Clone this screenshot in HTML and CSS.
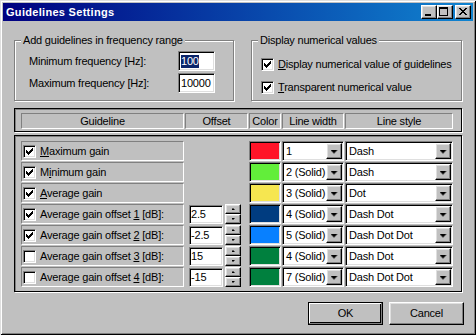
FILE: index.html
```html
<!DOCTYPE html>
<html>

<head>
    <meta charset="utf-8" />
    <title>Guidelines Settings</title>
    <meta name="viewport" content="width=device-width, initial-scale=1">
    <link rel="stylesheet" href="styles.css">
</head>

<body>
    <div class="window">
        <div class="titlebar">
            <span class="title">Guidelines Settings</span>
            <div class="caption-buttons">
                <span class="cap-btn">
                    <svg width="14" height="12" viewBox="0 0 14 12" shape-rendering="crispEdges"><path d="M3 8h6v2H3z" /></svg>
                </span>
                <span class="cap-btn">
                    <svg width="14" height="12" viewBox="0 0 14 12" shape-rendering="crispEdges"><path fill-rule="evenodd" d="M1 1h9v9H1z M2 3v6h7V3z" /></svg>
                </span>
                <span class="cap-btn close">
                    <svg width="14" height="12" viewBox="0 0 14 12" shape-rendering="crispEdges"><path d="M3 2h2v1H3z M9 2h2v1H9z M4 3h2v1H4z M8 3h2v1H8z M5 4h4v1H5z M6 5h2v1H6z M5 6h4v1H5z M4 7h2v1H4z M8 7h2v1H8z M3 8h2v1H3z M9 8h2v1H9z" /></svg>
                </span>
            </div>
        </div>

        <div class="client">
            <div class="groups">
                <div class="group freq">
                    <div class="group-title">Add guidelines in frequency range</div>
                    <div class="field">
                        <span>Minimum frequency [Hz]:</span>
                        <span class="edit"><span class="selected">100</span></span>
                    </div>
                    <div class="field">
                        <span>Maximum frequency [Hz]:</span>
                        <span class="edit">10000</span>
                    </div>
                </div>
                <div class="group display">
                    <div class="group-title">Display numerical values</div>
                    <div class="option">
                        <span class="check on"></span>
                        <span><u>D</u>isplay numerical value of guidelines</span>
                    </div>
                    <div class="option">
                        <span class="check on"></span>
                        <span><u>T</u>ransparent numerical value</span>
                    </div>
                </div>
            </div>

            <div class="frame header-frame">
                <div class="cols">
                    <div class="head-cell">Guideline</div>
                    <div class="head-cell">Offset</div>
                    <div class="head-cell">Color</div>
                    <div class="head-cell">Line width</div>
                    <div class="head-cell">Line style</div>
                </div>
            </div>

            <div class="frame list-frame">
                <div class="cols">
                    <div class="guide"><span class="check on"></span><span><u>M</u>aximum gain</span></div>
                    <div class="offset"></div>
                    <div class="swatch" style="background: #ff1428;"></div>
                    <div class="combo"><span class="combo-text">1</span><span class="drop"></span></div>
                    <div class="combo"><span class="combo-text">Dash</span><span class="drop"></span></div>
                </div>
                <div class="cols">
                    <div class="guide"><span class="check on"></span><span>M<u>i</u>nimum gain</span></div>
                    <div class="offset"></div>
                    <div class="swatch" style="background: #62ee3a;"></div>
                    <div class="combo"><span class="combo-text">2 (Solid)</span><span class="drop"></span></div>
                    <div class="combo"><span class="combo-text">Dash</span><span class="drop"></span></div>
                </div>
                <div class="cols">
                    <div class="guide"><span class="check on"></span><span><u>A</u>verage gain</span></div>
                    <div class="offset"></div>
                    <div class="swatch" style="background: #f6e650;"></div>
                    <div class="combo"><span class="combo-text">3 (Solid)</span><span class="drop"></span></div>
                    <div class="combo"><span class="combo-text">Dot</span><span class="drop"></span></div>
                </div>
                <div class="cols">
                    <div class="guide"><span class="check on"></span><span>Average gain offset <u>1</u> [dB]:</span></div>
                    <div class="offset"><span class="edit small">2.5</span><span class="spin"><span class="spin-btn up"></span><span class="spin-btn down"></span></span></div>
                    <div class="swatch" style="background: #003c80;"></div>
                    <div class="combo"><span class="combo-text">4 (Solid)</span><span class="drop"></span></div>
                    <div class="combo"><span class="combo-text">Dash Dot</span><span class="drop"></span></div>
                </div>
                <div class="cols">
                    <div class="guide"><span class="check on"></span><span>Average gain offset <u>2</u> [dB]:</span></div>
                    <div class="offset"><span class="edit small">-2.5</span><span class="spin"><span class="spin-btn up"></span><span class="spin-btn down"></span></span></div>
                    <div class="swatch" style="background: #0880ff;"></div>
                    <div class="combo"><span class="combo-text">5 (Solid)</span><span class="drop"></span></div>
                    <div class="combo"><span class="combo-text">Dash Dot Dot</span><span class="drop"></span></div>
                </div>
                <div class="cols">
                    <div class="guide"><span class="check"></span><span>Average gain offset <u>3</u> [dB]:</span></div>
                    <div class="offset"><span class="edit small">15</span><span class="spin"><span class="spin-btn up"></span><span class="spin-btn down"></span></span></div>
                    <div class="swatch" style="background: #00803e;"></div>
                    <div class="combo"><span class="combo-text">4 (Solid)</span><span class="drop"></span></div>
                    <div class="combo"><span class="combo-text">Dash Dot</span><span class="drop"></span></div>
                </div>
                <div class="cols">
                    <div class="guide"><span class="check"></span><span>Average gain offset <u>4</u> [dB]:</span></div>
                    <div class="offset"><span class="edit small">-15</span><span class="spin"><span class="spin-btn up"></span><span class="spin-btn down"></span></span></div>
                    <div class="swatch" style="background: #00803e;"></div>
                    <div class="combo"><span class="combo-text">7 (Solid)</span><span class="drop"></span></div>
                    <div class="combo"><span class="combo-text">Dash Dot Dot</span><span class="drop"></span></div>
                </div>
            </div>

            <div class="buttons">
                <span class="btn default">OK</span>
                <span class="btn">Cancel</span>
            </div>
        </div>
    </div>
</body>

</html>
```

FILE: styles.css
```css
/* base */

* {
    box-sizing: border-box;
}

body {
    margin: 0;
    background: #c0c0c0;
    color: #000;
    font: 11px/13px "Liberation Sans", Arial, sans-serif;
    letter-spacing: -0.2px;
}

/* window frame */

.window {
    width: 476px;
    height: 335px;
    padding: 3px;
    background: #c0c0c0;
    box-shadow: inset 1px 1px #dfdfdf, inset -1px -1px #000, inset 2px 2px #fff, inset -2px -2px #808080;
}

.titlebar {
    display: flex;
    align-items: center;
    justify-content: space-between;
    height: 18px;
    padding: 0 2px 0 3px;
    background: linear-gradient(to right, #000080, #1084d0);
}

.title {
    color: #fff;
    font-weight: bold;
    letter-spacing: 0.3px;
}

.caption-buttons {
    display: flex;
}

.cap-btn {
    display: block;
    width: 16px;
    height: 14px;
    background: #c0c0c0;
    border: 1px solid;
    border-color: #fff #000 #000 #fff;
    box-shadow: inset -1px -1px #808080, inset 1px 1px #dfdfdf;
}

.cap-btn svg {
    display: block;
}

.cap-btn.close {
    margin-left: 2px;
}

/* bevels */

.edit,
.check,
.swatch,
.combo {
    border: 1px solid;
    border-color: #808080 #fff #fff #808080;
    box-shadow: inset 1px 1px #000, inset -1px -1px #dfdfdf;
}

.head-cell,
.guide {
    border: 1px solid;
    border-color: #808080 #fff #fff #808080;
}

.frame {
    border: 1px solid #000;
    box-shadow: inset 1px 1px #808080, 1px 1px #fff;
}

/* client layout */

.client {
    padding: 19px 11px 0 11px;
}

.groups {
    display: flex;
    gap: 17px;
}

.group {
    height: 61px;
    border: 1px solid #808080;
    box-shadow: inset 1px 1px #fff, 1px 1px #fff;
}

.freq {
    width: 220px;
    padding: 0 18px 0 14px;
}

.display {
    width: 211px;
    padding: 0 0 0 9px;
}

.group-title {
    width: fit-content;
    margin: -7px 0 0 -8px;
    padding: 0 2px;
    background: #c0c0c0;
}

.display .group-title {
    margin-left: -3px;
}

.field {
    display: flex;
    align-items: center;
    justify-content: space-between;
    height: 20px;
    margin-top: 2px;
}

.freq .group-title + .field {
    margin-top: 4px;
}

.edit {
    display: flex;
    align-items: center;
    width: 37px;
    height: 20px;
    padding-left: 2px;
    background: #fff;
}

.selected {
    background: #0a246a;
    color: #fff;
}

.option {
    display: flex;
    align-items: center;
    gap: 4px;
    height: 13px;
    margin-top: 10px;
}

.group-title + .option {
    margin-top: 11px;
}

/* check boxes */

.check {
    display: block;
    flex-shrink: 0;
    width: 13px;
    height: 13px;
    background: #fff;
}

.check.on::after {
    content: "";
    display: block;
    width: 1px;
    height: 3px;
    margin: 4px 0 0 2px;
    background: #000;
    box-shadow: 1px 1px #000, 2px 2px #000, 3px 1px #000, 4px 0 #000, 5px -1px #000, 6px -2px #000;
}

/* guideline table */

.header-frame {
    height: 24px;
    margin-top: 7px;
    padding: 4px 0 0 6px;
}

.list-frame {
    display: grid;
    grid-auto-rows: 20px;
    row-gap: 1px;
    height: 157px;
    margin-top: 3px;
    padding: 5px 0 0 6px;
}

.cols {
    display: grid;
    grid-template-columns: 163px 63px 32px 62px 108px;
    column-gap: 1px;
}

.head-cell {
    height: 16px;
    text-align: center;
    line-height: 14px;
}

.guide {
    display: flex;
    align-items: center;
    gap: 4px;
    padding-left: 1px;
}

.offset {
    display: flex;
    gap: 2px;
    padding-left: 4px;
}

.edit.small {
    width: 34px;
    height: 19px;
    margin-top: 1px;
    padding-left: 1px;
}

.spin {
    display: flex;
    flex-direction: column;
    width: 16px;
}

.spin-btn,
.drop,
.btn {
    display: flex;
    align-items: center;
    justify-content: center;
    background: #c0c0c0;
    border: 1px solid;
    border-color: #fff #000 #000 #fff;
    box-shadow: inset -1px -1px #808080, inset 1px 1px #dfdfdf;
}

.spin-btn {
    height: 10px;
}

.spin-btn::after {
    content: "";
    width: 3px;
    height: 2px;
    background: #000;
}

.spin-btn.up::after {
    clip-path: polygon(1px 0, 2px 0, 2px 1px, 3px 1px, 3px 2px, 0 2px, 0 1px, 1px 1px);
}

.spin-btn.down::after {
    clip-path: polygon(0 0, 3px 0, 3px 1px, 2px 1px, 2px 2px, 1px 2px, 1px 1px, 0 1px);
}

.swatch {
    height: 20px;
}

.combo {
    display: flex;
    align-items: center;
    height: 20px;
    background: #fff;
}

.combo-text {
    flex: 1;
    padding-left: 3px;
    white-space: nowrap;
    overflow: hidden;
}

.drop {
    flex-shrink: 0;
    width: 16px;
    height: 16px;
    margin-right: 1px;
}

.drop::after {
    content: "";
    width: 7px;
    height: 4px;
    margin-top: 1px;
    background: #000;
    clip-path: polygon(0 0, 7px 0, 7px 1px, 6px 1px, 6px 2px, 5px 2px, 5px 3px, 4px 3px, 4px 4px, 3px 4px, 3px 3px, 2px 3px, 2px 2px, 1px 2px, 1px 1px, 0 1px);
}

/* dialog buttons */

.buttons {
    display: flex;
    justify-content: flex-end;
    gap: 6px;
    margin: 10px -2px 0 0;
}

.btn {
    width: 75px;
    height: 23px;
}

.btn.default {
    border-color: #000;
    box-shadow: inset -1px -1px #808080, inset 1px 1px #fff, inset -2px -2px #000;
}
```
